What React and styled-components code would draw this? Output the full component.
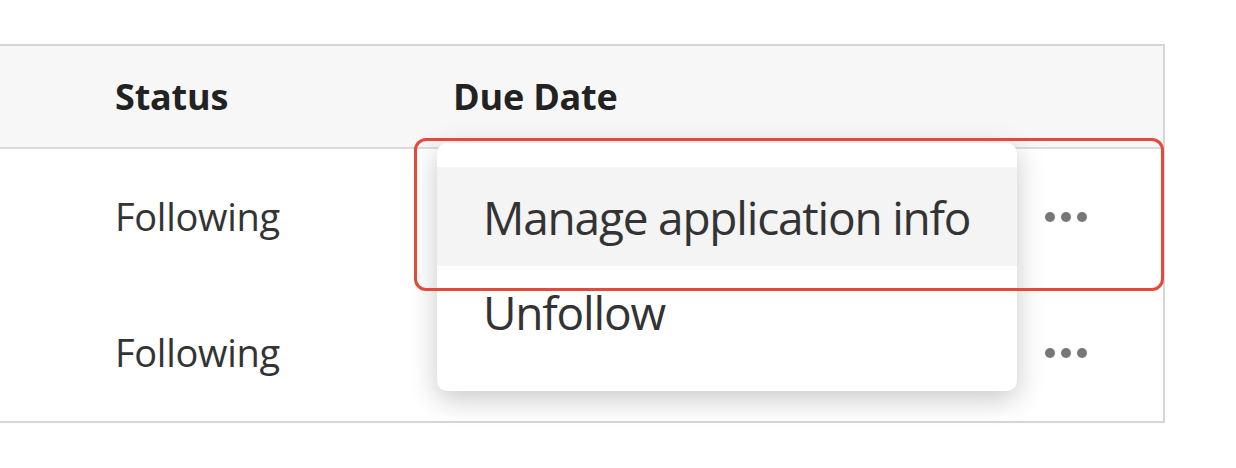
import styled, { createGlobalStyle } from "styled-components";

const GlobalStyle = createGlobalStyle`
  html, body {
    margin: 0;
    padding: 0;
    background: #ffffff;
    font-family: "Open Sans", "Noto Sans", sans-serif;
  }
`;

const Page = styled.div`
  padding-top: 44px;
  width: 1236px;
  height: 468px;
  box-sizing: border-box;
  position: relative;
`;

const Table = styled.div`
  width: 1165px;
  box-sizing: border-box;
  border: 2px solid #d6d6d6;
  border-left: none;
  position: relative;
`;

const Row = styled.div`
  display: grid;
  grid-template-columns: 115px 338px 1fr 118px;
  align-items: center;
  height: ${(p) => p.$height}px;
  background: ${(p) => (p.$head ? "#f7f7f7" : "#ffffff")};
  border-bottom: ${(p) => (p.$head ? "2px solid #dcdcdc" : "none")};
  box-sizing: border-box;
`;

const HeadCell = styled.div`
  font-weight: 700;
  font-size: 36px;
  color: #222;
  letter-spacing: -0.2px;
`;

const Cell = styled.div`
  font-size: 38px;
  color: #333;
  letter-spacing: -0.3px;
  padding-bottom: 2px;
`;

const Dots = styled.div`
  display: flex;
  gap: 6px;
  & span {
    width: 10px;
    height: 10px;
    border-radius: 50%;
    background: #777;
  }
`;

const Menu = styled.div`
  position: absolute;
  left: 437px;
  top: 97px;
  width: 580px;
  height: 248px;
  background: #fff;
  border-radius: 10px;
  box-shadow: 0 8px 28px rgba(0, 0, 0, 0.22);
  padding-top: 24px;
  box-sizing: border-box;
`;

const MenuItem = styled.div`
  height: 99px;
  display: flex;
  align-items: center;
  padding-left: 46px;
  padding-bottom: ${(p) => (p.$active ? 0 : 8)}px;
  box-sizing: border-box;
  font-size: 46px;
  letter-spacing: -1.2px;
  color: #333;
  background: ${(p) => (p.$active ? "#f4f4f4" : "transparent")};
`;

const Highlight = styled.div`
  position: absolute;
  left: 414px;
  top: 138px;
  width: 750px;
  height: 153px;
  border: 3px solid #e24b3b;
  border-radius: 12px;
  box-sizing: border-box;
  pointer-events: none;
`;

const MoreDots = () => (
  <Dots>
    <span />
    <span />
    <span />
  </Dots>
);

export default function App() {
  const rows = ["Following", "Following"];
  return (
    <>
      <GlobalStyle />
      <Page>
        <Table>
          <Row $head $height={103}>
            <div />
            <HeadCell>Status</HeadCell>
            <HeadCell>Due Date</HeadCell>
            <div />
          </Row>
          {rows.map((status, i) => (
            <Row key={i} $height={136}>
              <div />
              <Cell>{status}</Cell>
              <div />
              <MoreDots />
            </Row>
          ))}
          <Menu>
            <MenuItem $active>Manage application info</MenuItem>
            <MenuItem>Unfollow</MenuItem>
          </Menu>
        </Table>
        <Highlight />
      </Page>
    </>
  );
}
